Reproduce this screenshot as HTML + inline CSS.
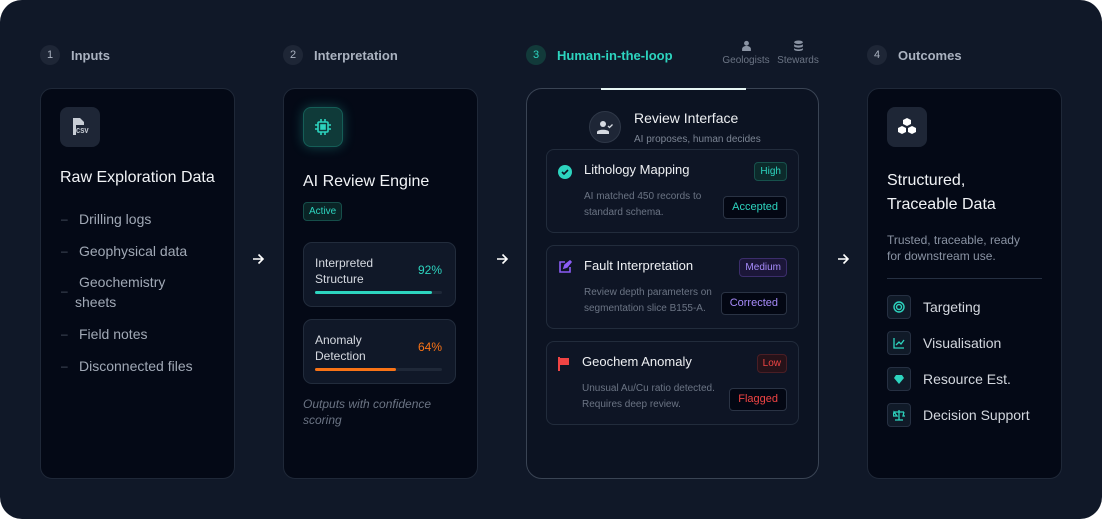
<!DOCTYPE html>
<html><head><style>
*{box-sizing:border-box;margin:0;padding:0}
body{width:1102px;height:519px;background:#fff;font-family:"Liberation Sans",sans-serif;overflow:hidden}
.wrap{position:absolute;left:0;top:0;width:1102px;height:519px;background:#101828;border-radius:22px}
.abs{position:absolute}
.step{position:absolute;top:45px;height:20px;display:flex;align-items:center;font-size:13px;font-weight:bold;color:#aab2c0}
.step .n{width:20px;height:20px;border-radius:50%;background:#1e2636;color:#aab2c0;font-size:11px;font-weight:normal;display:flex;align-items:center;justify-content:center;margin-right:11px}
.card{position:absolute;top:88px;height:391px;background:#040916;border:1px solid #1f2838;border-radius:12px}
.ico{position:absolute;width:40px;height:40px;border-radius:8px;background:#1e2636;display:flex;align-items:center;justify-content:center}
.t{position:absolute;color:#f1f3f6;font-size:16px;white-space:nowrap}
.li{position:absolute;left:38px;color:#a1a9b6;font-size:14px}
.dash{position:absolute;left:20px;color:#4a5262;font-size:12px}
.arrow{position:absolute;top:253px}
.sub{position:absolute;left:19px;width:153px;height:65px;background:#101828;border:1px solid #222c3c;border-radius:9px}
.sub .l{position:absolute;left:11px;top:12px;font-size:12px;line-height:16px;color:#d6dae1}
.sub .p{position:absolute;right:13px;top:20px;font-size:12px}
.sub .bar{position:absolute;left:11px;right:13px;top:48px;height:3px;background:#1f2838;border-radius:2px}
.rv{position:absolute;left:19px;width:253px;height:84px;background:#0e1525;border:1px solid #222c3c;border-radius:8px}
.rv .h{position:absolute;left:37px;top:12px;font-size:13px;color:#eef0f3}
.rv .d{position:absolute;left:37px;top:39px;font-size:10px;line-height:16px;color:#6b7484}
.badge{position:absolute;font-size:10px;padding:0 5px;height:19px;line-height:17px;border-radius:4px;border:1px solid}
.btn{position:absolute;font-size:11px;height:23px;line-height:21px;padding:0 8px;border-radius:4px;background:#030713;border:1px solid #2a3344}
.oi{position:absolute;left:19px;width:24px;height:24px;border-radius:4px;background:#101a28;border:1px solid #263042;display:flex;align-items:center;justify-content:center}
.ot{position:absolute;left:55px;font-size:14px;color:#d3d7de}
</style></head><body><div class="wrap">
<div class="step" style="left:40px"><span class="n">1</span>Inputs</div>
<div class="step" style="left:283px"><span class="n">2</span>Interpretation</div>
<div class="step" style="left:526px;color:#2dd4bf"><span class="n" style="background:#123a3a;color:#2dd4bf">3</span>Human-in-the-loop</div>
<div class="step" style="left:867px"><span class="n">4</span>Outcomes</div>
<div class="abs" style="left:721px;top:40px;width:50px;text-align:center;font-size:10px;color:#6b7484">
<svg width="11" height="11" viewBox="0 0 10 10" style="display:block;margin:0 auto 4px"><circle cx="5" cy="3" r="2.2" fill="#8a93a3"/><path d="M1 10v-2a3 2 0 0 1 8 0v2z" fill="#8a93a3"/></svg>Geologists</div>
<div class="abs" style="left:774px;top:40px;width:48px;text-align:center;font-size:10px;color:#6b7484">
<svg width="11" height="11" viewBox="0 0 10 10" style="display:block;margin:0 auto 4px"><ellipse cx="5" cy="2" rx="4" ry="1.6" fill="#8a93a3"/><path d="M1 3.5c0 2 8 2 8 0v2c0 2-8 2-8 0zM1 7c0 2 8 2 8 0v1.5c0 2-8 2-8 0z" fill="#8a93a3"/></svg>Stewards</div>

<div class="card" style="left:40px;width:195px">
<div class="ico" style="left:19px;top:18px"><svg width="18" height="20" viewBox="0 0 18 20"><path d="M2 1h7l4 4v3H5v10H2z" fill="#c8cdd5"/><text x="5" y="16" font-size="7" font-family="Liberation Mono" font-weight="bold" fill="#c8cdd5">CSV</text></svg></div>
<div class="t" style="left:19px;top:80px">Raw Exploration Data</div>
<div class="dash" style="top:123px">–</div><div class="li" style="top:122px">Drilling logs</div>
<div class="dash" style="top:155px">–</div><div class="li" style="top:154px">Geophysical data</div>
<div class="dash" style="top:195px">–</div><div class="li" style="top:185px">Geochemistry</div><div class="li" style="left:34px;top:205px">sheets</div>
<div class="dash" style="top:238px">–</div><div class="li" style="top:237px">Field notes</div>
<div class="dash" style="top:270px">–</div><div class="li" style="top:269px">Disconnected files</div>
</div>
<svg class="arrow" style="left:252px" width="13" height="12" viewBox="0 0 13 12" fill="none" stroke="#fff" stroke-width="1.6"><path d="M1 6h10M6.5 1.5L11 6l-4.5 4.5"/></svg>
<div class="card" style="left:283px;width:195px">
<div class="ico" style="left:19px;top:18px;background:#0f3a39;border:1px solid #155e57;box-shadow:0 0 12px rgba(45,212,191,.3)"><svg width="18" height="18" viewBox="0 0 18 18" fill="none" stroke="#2dd4bf" stroke-width="1.6"><rect x="4" y="4" width="10" height="10" rx="1"/><rect x="7" y="7" width="4" height="4" fill="#2dd4bf"/><path d="M7 1v3M11 1v3M7 14v3M11 14v3M1 7h3M1 11h3M14 7h3M14 11h3"/></svg></div>
<div class="t" style="left:19px;top:84px">AI Review Engine</div>
<div class="badge" style="left:19px;top:113px;color:#2dd4bf;border-color:#164e4a;background:#0a2426;font-size:10px">Active</div>
<div class="sub" style="top:153px"><div class="l">Interpreted<br>Structure</div><div class="p" style="color:#2dd4bf">92%</div><div class="bar"><div style="width:92%;height:100%;background:#2dd4bf;border-radius:2px"></div></div></div>
<div class="sub" style="top:230px"><div class="l">Anomaly<br>Detection</div><div class="p" style="color:#f97316">64%</div><div class="bar"><div style="width:64%;height:100%;background:#f97316;border-radius:2px"></div></div></div>
<div class="abs" style="left:19px;top:307px;font-size:12px;line-height:16px;font-style:italic;color:#6b7484">Outputs with confidence<br>scoring</div>
</div>
<svg class="arrow" style="left:496px" width="13" height="12" viewBox="0 0 13 12" fill="none" stroke="#fff" stroke-width="1.6"><path d="M1 6h10M6.5 1.5L11 6l-4.5 4.5"/></svg>
<div class="card" style="left:526px;width:293px;background:#0c1322;border-color:#3a4454;border-radius:16px">
<div class="abs" style="left:74px;top:-1px;width:145px;height:2px;background:#e6f5f3"></div>
<div class="abs" style="left:62px;top:22px;width:32px;height:32px;border-radius:50%;background:#1e2636;border:1px solid #2f3848;display:flex;align-items:center;justify-content:center"><svg width="16" height="14" viewBox="0 0 16 14"><circle cx="6" cy="4" r="3" fill="#d6dae1"/><path d="M0 14v-2c0-3 12-3 12 0v2z" fill="#d6dae1"/><path d="M11 6l1.5 1.5 3-3" stroke="#d6dae1" stroke-width="1.3" fill="none"/></svg></div>
<div class="abs" style="left:107px;top:21px;font-size:14px;color:#eef0f3">Review Interface</div>
<div class="abs" style="left:107px;top:45px;font-size:10px;color:#7c8594">AI proposes, human decides</div>
<div class="rv" style="top:60px">
<svg class="abs" style="left:11px;top:15px" width="14" height="14" viewBox="0 0 14 14"><circle cx="7" cy="7" r="7" fill="#2dd4bf"/><path d="M4 7l2 2 4-4" stroke="#0c1322" stroke-width="1.6" fill="none"/></svg>
<div class="h">Lithology Mapping</div><div class="d">AI matched 450 records to<br>standard schema.</div>
<div class="badge" style="right:11px;top:12px;color:#2dd4bf;border-color:#17514c;background:#0c2a2b">High</div>
<div class="btn" style="right:11px;top:46px;color:#2dd4bf">Accepted</div></div>
<div class="rv" style="top:156px">
<svg class="abs" style="left:11px;top:14px" width="14" height="14" viewBox="0 0 14 14" fill="none" stroke="#8b5cf6" stroke-width="1.6"><path d="M7 2H2v10h10V7"/><path d="M6 8l1-3 5-4 1 1-4 5z" fill="#8b5cf6"/></svg>
<div class="h">Fault Interpretation</div><div class="d">Review depth parameters on<br>segmentation slice B155-A.</div>
<div class="badge" style="right:11px;top:12px;color:#a78bfa;border-color:#3b2d6b;background:#1b1638">Medium</div>
<div class="btn" style="right:11px;top:46px;color:#a78bfa">Corrected</div></div>
<div class="rv" style="top:252px">
<svg class="abs" style="left:11px;top:15px" width="12" height="14" viewBox="0 0 12 14"><path d="M1 0v14" stroke="#ef4444" stroke-width="2"/><path d="M1 1h10v7H1z" fill="#ef4444"/></svg>
<div class="h" style="left:35px">Geochem Anomaly</div><div class="d" style="left:35px">Unusual Au/Cu ratio detected.<br>Requires deep review.</div>
<div class="badge" style="right:11px;top:12px;color:#ef4444;border-color:#4a1e25;background:#261219">Low</div>
<div class="btn" style="right:11px;top:46px;color:#f04444">Flagged</div></div>
</div>
<svg class="arrow" style="left:837px" width="13" height="12" viewBox="0 0 13 12" fill="none" stroke="#fff" stroke-width="1.6"><path d="M1 6h10M6.5 1.5L11 6l-4.5 4.5"/></svg>
<div class="card" style="left:867px;width:195px">
<div class="ico" style="left:19px;top:18px"><svg width="20" height="18" viewBox="0 0 20 18" fill="#fff"><path d="M10 0l4 2v4l-4 2-4-2V2z"/><path d="M5 8l4 2v4l-4 2-4-2v-4z"/><path d="M15 8l4 2v4l-4 2-4-2v-4z"/></svg></div>
<div class="t" style="left:19px;top:80px;line-height:24px">Structured,<br>Traceable Data</div>
<div class="abs" style="left:19px;top:143px;font-size:12px;line-height:16px;color:#8a93a3">Trusted, traceable, ready<br>for downstream use.</div>
<div class="abs" style="left:19px;top:189px;width:155px;height:1px;background:#263042"></div>
<div class="oi" style="top:206px"><svg width="12" height="12" viewBox="0 0 12 12" fill="none" stroke="#2dd4bf" stroke-width="1.4"><circle cx="6" cy="6" r="5"/><circle cx="6" cy="6" r="2.5"/></svg></div><div class="ot" style="top:210px">Targeting</div>
<div class="oi" style="top:242px"><svg width="12" height="12" viewBox="0 0 12 12" fill="none" stroke="#2dd4bf" stroke-width="1.3"><path d="M1 1v10h10"/><path d="M3 8l3-3 2 2 3-4"/></svg></div><div class="ot" style="top:246px">Visualisation</div>
<div class="oi" style="top:278px"><svg width="12" height="12" viewBox="0 0 12 12" fill="#2dd4bf"><path d="M3 2h6l2 3-5 6-5-6z"/></svg></div><div class="ot" style="top:282px">Resource Est.</div>
<div class="oi" style="top:314px"><svg width="12" height="12" viewBox="0 0 12 12" fill="none" stroke="#2dd4bf" stroke-width="1.3"><path d="M6 1v10M2 11h8M1 3h10M1 3l-1 4h4zM11 3l-1 4h3"/></svg></div><div class="ot" style="top:318px">Decision Support</div>
</div>
</div></body></html>
